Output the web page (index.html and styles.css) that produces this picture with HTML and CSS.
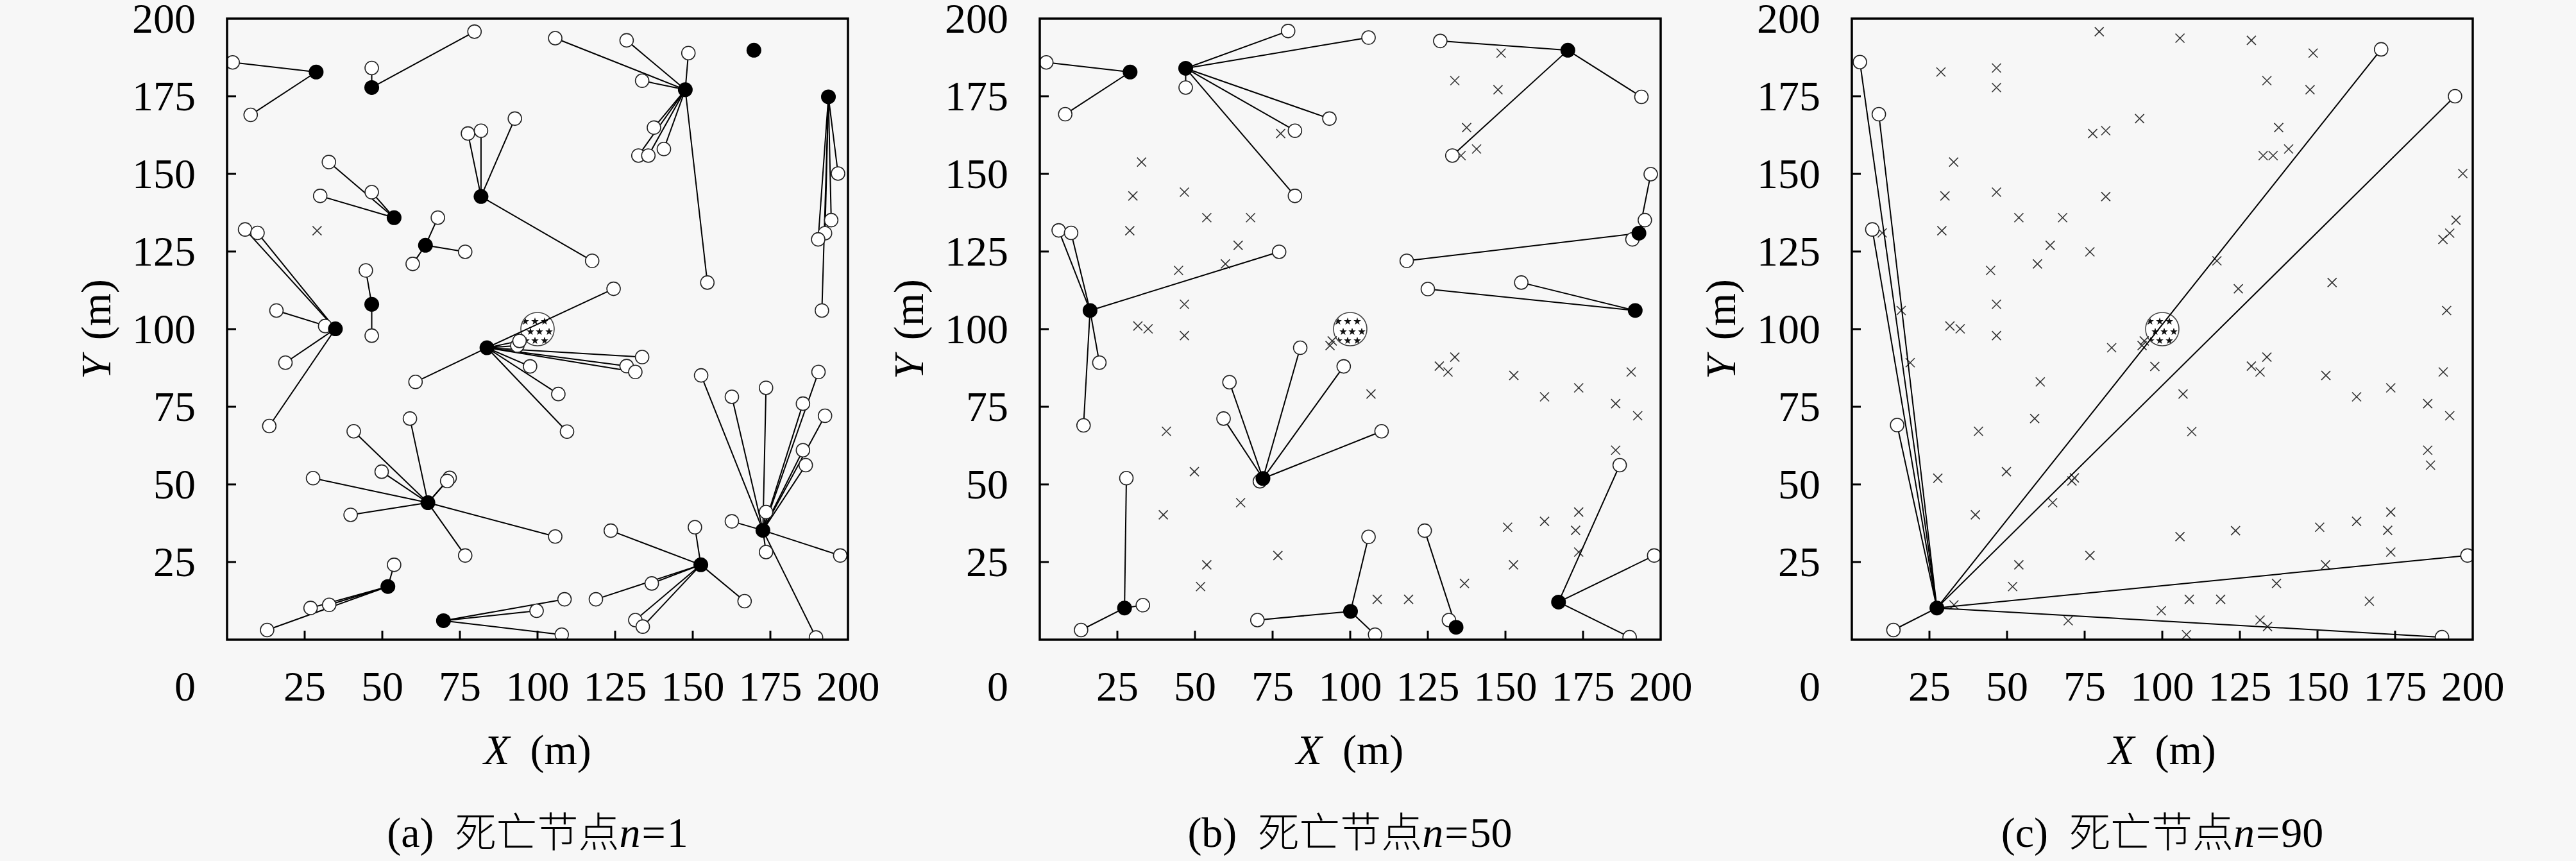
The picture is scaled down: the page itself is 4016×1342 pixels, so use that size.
FILE: index.html
```html
<!DOCTYPE html>
<html lang="zh">
<head>
<meta charset="utf-8">
<title>死亡节点</title>
<link rel="stylesheet" href="styles.css">
</head>
<body>
<div class="figure">
  <div class="panel">
    <div class="plot-row">
      <div class="ylabel-wrap"><div class="ylabel"><i class="var">Y</i>(m)</div></div>
      <svg class="chart" id="chart-a" xmlns="http://www.w3.org/2000/svg"></svg>
    </div>
    <div class="xlabel"><i class="var">X</i>(m)</div>
    <div class="caption"><span class="tag">(a)</span><span class="cjk">死亡节点</span><i>n</i><span class="eq">=</span>1</div>
  </div>
  <div class="panel">
    <div class="plot-row">
      <div class="ylabel-wrap"><div class="ylabel"><i class="var">Y</i>(m)</div></div>
      <svg class="chart" id="chart-b" xmlns="http://www.w3.org/2000/svg"></svg>
    </div>
    <div class="xlabel"><i class="var">X</i>(m)</div>
    <div class="caption"><span class="tag">(b)</span><span class="cjk">死亡节点</span><i>n</i><span class="eq">=</span>50</div>
  </div>
  <div class="panel">
    <div class="plot-row">
      <div class="ylabel-wrap"><div class="ylabel"><i class="var">Y</i>(m)</div></div>
      <svg class="chart" id="chart-c" xmlns="http://www.w3.org/2000/svg"></svg>
    </div>
    <div class="xlabel"><i class="var">X</i>(m)</div>
    <div class="caption"><span class="tag">(c)</span><span class="cjk">死亡节点</span><i>n</i><span class="eq">=</span>90</div>
  </div>
</div>
<script src="script.js"></script>
</body>
</html>
```
FILE: styles.css
```css
html, body {
  margin: 0;
  padding: 0;
  background: #f7f7f7;
}
body {
  font-family: "Liberation Serif", "Times New Roman", serif;
  color: #000;
}
.figure {
  display: flex;
  width: 4016px;
  height: 1342px;
  padding-left: 90px;
  box-sizing: border-box;
  overflow: hidden;
}
.panel {
  flex: none;
  width: 1266.5px;
  display: flex;
  flex-direction: column;
}
.plot-row {
  display: flex;
  align-items: flex-start;
  height: 1110px;
}
.ylabel-wrap {
  flex: none;
  width: 120px;
  height: 1026px;
  display: flex;
  align-items: center;
  justify-content: center;
}
.ylabel {
  writing-mode: vertical-rl;
  transform: rotate(180deg);
  font-size: 66px;
  line-height: 66px;
  white-space: nowrap;
}
.ylabel .var {
  margin-bottom: 24px;
}
.chart {
  flex: none;
  width: 1146.5px;
  height: 1110px;
  overflow: visible;
}
.xlabel {
  width: 968px;
  margin: 26px 0 0 264px;
  text-align: center;
  font-size: 66px;
  line-height: 66px;
  white-space: nowrap;
}
.xlabel .var {
  margin-right: 32px;
}
.caption {
  width: 968px;
  margin: 57px 0 0 264px;
  text-align: center;
  font-size: 66px;
  line-height: 66px;
  white-space: nowrap;
}
.caption .tag {
  margin-right: 33px;
}
.caption .cjk {
  font-family: "Noto Sans CJK SC", sans-serif;
  font-size: 64px;
  font-weight: 300;
}
.caption .eq {
  margin: 0 2px;
}

/* chart parts */
.frame {
  fill: none;
  stroke: #000;
  stroke-width: 3.5;
}
.tick {
  stroke: #000;
  stroke-width: 3;
}
.tick-label {
  font-family: "Liberation Serif", "Times New Roman", serif;
  font-size: 66px;
  fill: #000;
}
.link {
  stroke: #000;
  stroke-width: 2;
  fill: none;
}
.member {
  fill: #fff;
  stroke: #222;
  stroke-width: 1.6;
}
.head {
  fill: #000;
  stroke: none;
}
.dead {
  stroke: #333;
  stroke-width: 1.6;
  fill: none;
}
.sink {
  fill: #fff;
  stroke: #444;
  stroke-width: 1.6;
}
.star {
  fill: #111;
}
```
FILE: script.js
```js
(function () {
  var NS = 'http://www.w3.org/2000/svg';
  var S = 4.84, X0 = 144, Y0 = 29;
  function fx(x) { return X0 + x * S; }
  function fy(y) { return Y0 + (200 - y) * S; }

  var A = [
    [[28.7,182.8], [[1.8,185.9],[7.6,169]]],
    [[46.6,177.8], [[46.6,184.1],[79.7,195.8]]],
    [[169.7,189.8], []],
    [[147.6,177.1], [[105.7,193.7],[128.7,193],[148.6,188.9],[133.7,180],[137.5,164.9],[132.5,155.9],[135.7,155.9],[140.7,158],[154.7,115]]],
    [[193.7,174.8], [[196.8,150.1],[194.6,135.1],[192.6,130.9],[190.4,128.9],[191.6,106]]],
    [[53.8,135.9], [[32.8,153.8],[46.6,144.1],[30,142.9]]],
    [[81.8,142.7], [[77.6,163],[81.8,163.9],[92.7,167.8],[117.6,122]]],
    [[63.9,127], [[67.9,135.9],[76.7,124.9],[59.8,121]]],
    [[34.9,100.1], [[5.8,132.1],[9.8,131],[15.9,106],[31.6,101],[18.8,89.2],[13.6,68.8]]],
    [[46.6,108], [[44.7,118.9],[46.6,97.9]]],
    [[83.7,94], [[124.5,113],[60.7,83],[93.5,94.7],[94.2,96.2],[133.7,91],[128.7,88.1],[131.5,86.2],[97.6,88],[106.7,79.1],[109.5,67]]],
    [[64.7,44.1], [[58.9,71.2],[40.8,67.1],[49.8,54.1],[71.7,52.1],[70.9,51.1],[27.7,52],[39.8,40.2],[105.7,33.2],[76.7,27.1]]],
    [[172.6,35.2], [[152.7,85.1],[162.6,78.2],[173.6,81.1],[190.5,86.2],[185.5,76],[192.6,72.1],[185.5,61],[186.4,56.2],[173.6,41.1],[162.6,38.1],[173.6,28.2],[197.5,27.1],[189.7,0.7]]],
    [[152.6,24.1], [[123.6,35.1],[150.7,36.2],[136.8,18.1],[118.8,13],[166.7,12.4],[131.5,6.3],[133.9,4.2]]],
    [[51.8,17.1], [[53.8,24.1],[32.9,11.2],[26.9,10.2],[12.9,3.1]]],
    [[69.7,6.1], [[108.7,13],[99.7,9.3],[107.8,1.6]]]
  ];
  var crossA = [[29,131.7]];

  var B = [
    [[29.1,182.8], [[2.1,185.9],[8.2,169.2]]],
    [[47,184], [[47,177.8],[80,196],[105.9,193.9],[93.3,167.8],[82.2,163.9],[82.2,142.9]]],
    [[170.1,189.8], [[129,192.8],[193.8,174.8],[132.9,155.9]]],
    [[16.2,106], [[6.1,131.8],[10.1,131],[77.1,124.9],[19.2,89.2],[14.1,69]]],
    [[193,130.9], [[196.8,149.9],[194.9,135.1],[190.9,128.9],[118.2,122]]],
    [[191.8,106], [[125,112.9],[155.1,115]]],
    [[71.9,51.9], [[83.9,94],[97.9,88],[61.1,82.9],[59.2,71.2],[110.1,67.1],[70.9,51]]],
    [[27.3,10.2], [[27.9,52],[33.2,11.1],[13.3,3.1]]],
    [[100.1,9.1], [[105.9,33.1],[70.1,6.3],[108,1.6]]],
    [[134.1,4], [[124,35.1],[131.8,6.3]]],
    [[167.1,12.1], [[186.8,56.2],[197.9,27.1],[190,0.8]]]
  ];

  var C = [
    [[27.4,10.2], [[2.6,186],[8.7,169.2],[6.6,132.1],[14.6,69.1],[13.4,3.1],[170.5,190.1],[194.3,175],[198.3,27.1],[190.1,0.8]]]
  ];

  function nodesOf(G) {
    var r = [];
    G.forEach(function (g) { r.push(g[0]); g[1].forEach(function (c) { r.push(c); }); });
    return r;
  }
  var allA = nodesOf(A).concat(crossA);
  function deadFrom(G) {
    var alive = nodesOf(G);
    return allA.filter(function (p) {
      return !alive.some(function (q) { return Math.hypot(p[0] - q[0], p[1] - q[1]) < 1.6; });
    });
  }

  function mk(tag, attrs, cls) {
    var e = document.createElementNS(NS, tag);
    if (attrs) for (var k in attrs) e.setAttribute(k, attrs[k]);
    if (cls) e.setAttribute('class', cls);
    return e;
  }

  function starPath(cx, cy, ro, ri) {
    var d = '';
    for (var k = 0; k < 10; k++) {
      var a = (-90 + k * 36) * Math.PI / 180;
      var r = k % 2 ? ri : ro;
      d += (k ? 'L' : 'M') + (cx + r * Math.cos(a)).toFixed(2) + ' ' + (cy + r * Math.sin(a)).toFixed(2);
    }
    return d + 'Z';
  }

  function draw(id, G, X) {
    var svg = document.getElementById(id);
    var defs = mk('defs');
    var clip = mk('clipPath', { id: 'clip-' + id });
    clip.appendChild(mk('rect', { x: X0, y: Y0, width: 200 * S, height: 200 * S }));
    defs.appendChild(clip);
    var sx = fx(100), sy = fy(100), sr = 26;
    var sclip = mk('clipPath', { id: 'sink-' + id });
    sclip.appendChild(mk('circle', { cx: sx, cy: sy, r: sr - 1 }));
    defs.appendChild(sclip);
    svg.appendChild(defs);

    var g = mk('g', { 'clip-path': 'url(#clip-' + id + ')' });
    svg.appendChild(g);

    // sink
    g.appendChild(mk('circle', { cx: sx, cy: sy, r: sr }, 'sink'));
    var sg = mk('g', { 'clip-path': 'url(#sink-' + id + ')' });
    [[-19,-12],[-4,-12],[11,-12],[-11,4],[3,4],[18,4],[-4,18],[11,18],[-26,-12],[-18,18]].forEach(function (o) {
      sg.appendChild(mk('path', { d: starPath(sx + o[0], sy + o[1], 6.2, 2.5) }, 'star'));
    });
    g.appendChild(sg);

    // dead nodes
    X.forEach(function (p) {
      var x = fx(p[0]), y = fy(p[1]), a = 7;
      g.appendChild(mk('path', { d: 'M' + (x - a) + ' ' + (y - a) + 'L' + (x + a) + ' ' + (y + a) + 'M' + (x - a) + ' ' + (y + a) + 'L' + (x + a) + ' ' + (y - a) }, 'dead'));
    });

    // links
    G.forEach(function (grp) {
      var h = grp[0];
      grp[1].forEach(function (c) {
        g.appendChild(mk('line', { x1: fx(h[0]), y1: fy(h[1]), x2: fx(c[0]), y2: fy(c[1]) }, 'link'));
      });
    });
    // members
    G.forEach(function (grp) {
      grp[1].forEach(function (c) {
        g.appendChild(mk('circle', { cx: fx(c[0]), cy: fy(c[1]), r: 10.5 }, 'member'));
      });
    });
    // heads
    G.forEach(function (grp) {
      g.appendChild(mk('circle', { cx: fx(grp[0][0]), cy: fy(grp[0][1]), r: 11.5 }, 'head'));
    });

    // frame, ticks, labels
    svg.appendChild(mk('rect', { x: X0, y: Y0, width: 200 * S, height: 200 * S }, 'frame'));
    for (var v = 25; v < 200; v += 25) {
      svg.appendChild(mk('line', { x1: fx(v), y1: fy(0), x2: fx(v), y2: fy(0) - 14 }, 'tick'));
      svg.appendChild(mk('line', { x1: fx(0), y1: fy(v), x2: fx(0) + 14, y2: fy(v) }, 'tick'));
    }
    for (var t = 25; t <= 200; t += 25) {
      var ty = mk('text', { x: 95, y: fy(t) + 22, 'text-anchor': 'end' }, 'tick-label');
      ty.textContent = String(t);
      svg.appendChild(ty);
      var tx = mk('text', { x: fx(t), y: 1092, 'text-anchor': 'middle' }, 'tick-label');
      tx.textContent = String(t);
      svg.appendChild(tx);
    }
    var t0 = mk('text', { x: 95, y: 1092, 'text-anchor': 'end' }, 'tick-label');
    t0.textContent = '0';
    svg.appendChild(t0);
  }

  draw('chart-a', A, crossA);
  draw('chart-b', B, deadFrom(B));
  draw('chart-c', C, deadFrom(C));
})();
```
